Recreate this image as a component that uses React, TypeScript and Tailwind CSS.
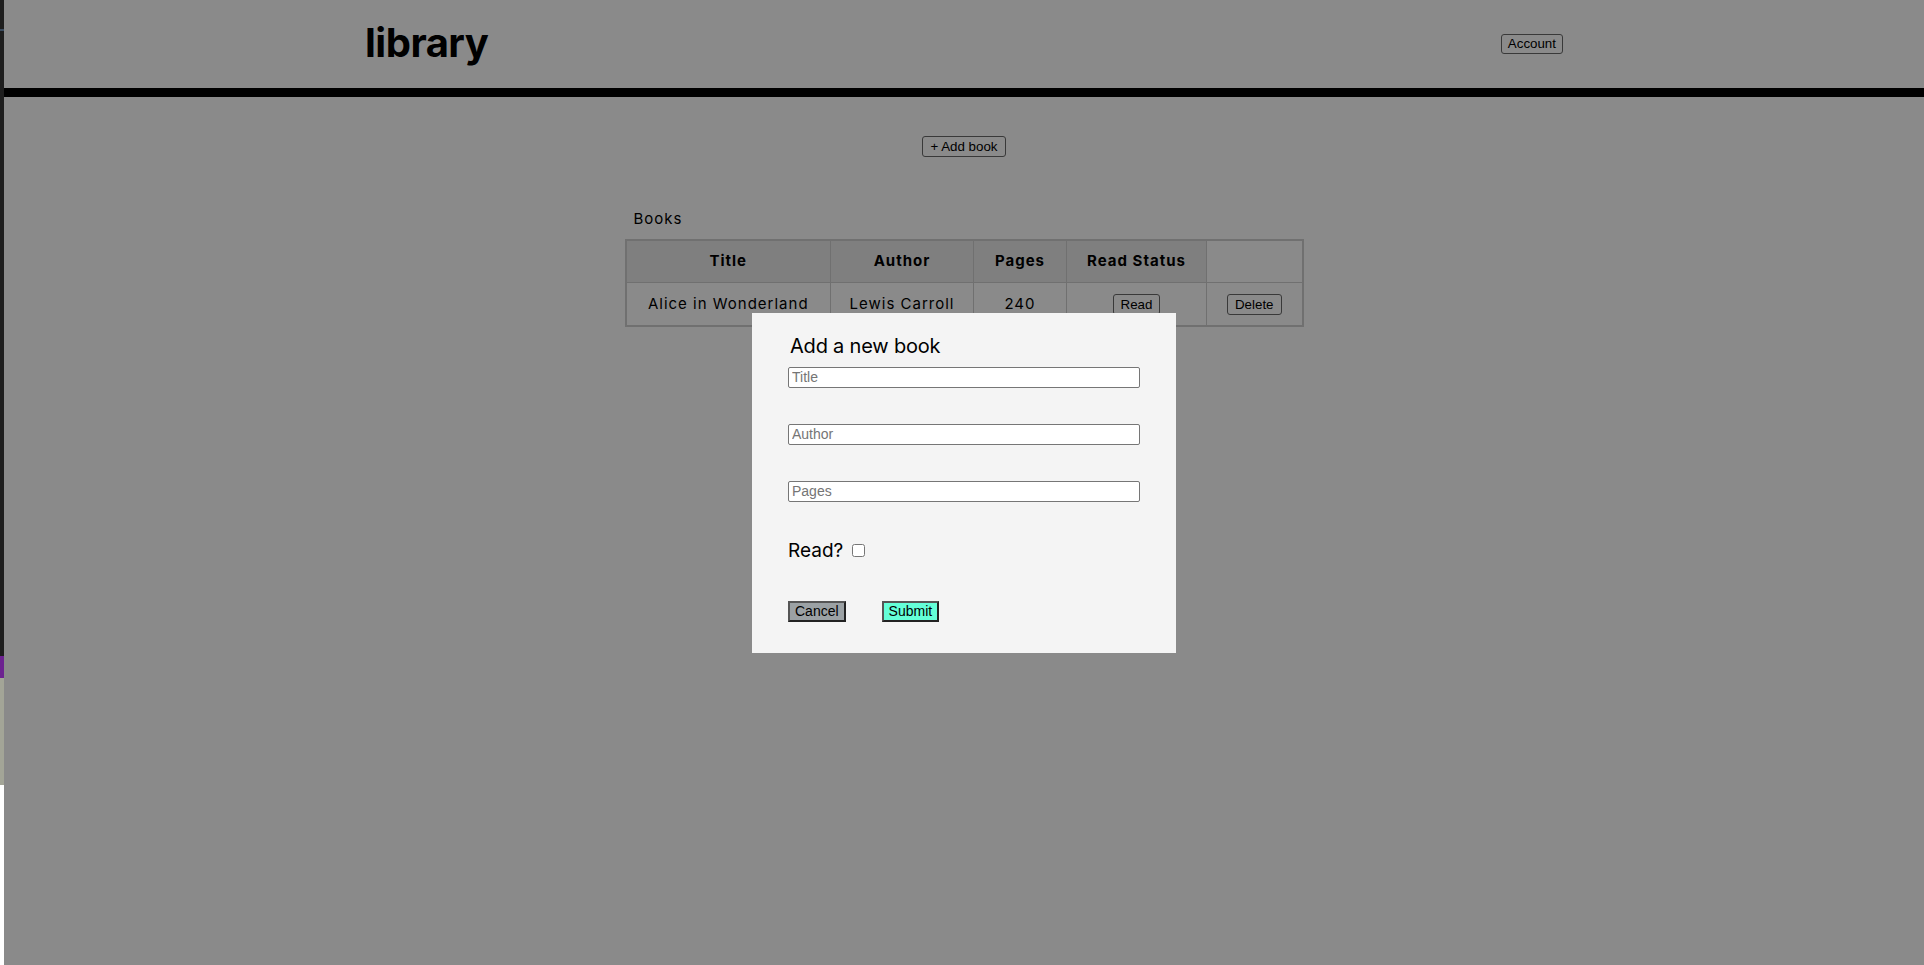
import React from "react";

const sans = "font-['Inter','Noto_Sans',sans-serif]";
const ui = "font-['Liberation_Sans',Arial,sans-serif] text-[13.33px]";

const books = [
  { title: "Alice in Wonderland", author: "Lewis Carroll", pages: 240, read: true },
];

function SideStrip() {
  return (
    <div className="flex w-[4px] shrink-0 flex-col">
      <div className="h-[29px] bg-[#1e1e1e]" />
      <div className="h-[2px] bg-[#3b4c60]" />
      <div className="h-[625px] bg-[#1e1e1e]" />
      <div className="h-[22px] bg-[#6c2290]" />
      <div className="h-[107px] bg-[#a3a597]" />
      <div className="flex-1 bg-white" />
    </div>
  );
}

function Header() {
  return (
    <header className="h-[97px] border-b-[9px] border-black">
      <div className="mx-auto flex h-full max-w-[1198px] items-center justify-between">
        <h1 className={`${sans} text-[40px] font-bold leading-none tracking-[-0.5px] text-black pb-[2px]`}>
          library
        </h1>
        <button className={`${ui} h-[20px] rounded-[3px] border border-[#6a6a6a] px-[6px] leading-none text-black`}>
          Account
        </button>
      </div>
    </header>
  );
}

function BookTable() {
  return (
    <table className={`${sans} mx-auto border-collapse border-2 border-[#cfcfcf] text-[15px] tracking-[1px] text-black`}>
      <caption className="pb-[8px] pl-[9px] text-left text-[15px] tracking-[1px]">Books</caption>
      <thead>
        <tr className="h-[43px]">
          <th className="w-[205px] border border-[#cfcfcf] bg-[#ebebeb] font-bold">Title</th>
          <th className="w-[143px] border border-[#cfcfcf] bg-[#ebebeb] font-bold">Author</th>
          <th className="w-[93px] border border-[#cfcfcf] bg-[#ebebeb] font-bold">Pages</th>
          <th className="w-[140px] border border-[#cfcfcf] bg-[#ebebeb] font-bold">Read Status</th>
          <th className="w-[96px] border border-[#cfcfcf]" />
        </tr>
      </thead>
      <tbody>
        {books.map((b) => (
          <tr key={b.title} className="h-[43px] text-center">
            <td className="border border-[#cfcfcf]">{b.title}</td>
            <td className="border border-[#cfcfcf]">{b.author}</td>
            <td className="border border-[#cfcfcf]">{b.pages}</td>
            <td className="border border-[#cfcfcf]">
              <button className={`${ui} h-[21px] rounded-[3px] border border-[#6a6a6a] px-[7px] leading-none tracking-normal`}>
                {b.read ? "Read" : "Not read"}
              </button>
            </td>
            <td className="border border-[#cfcfcf]">
              <button className={`${ui} h-[21px] rounded-[3px] border border-[#6a6a6a] px-[7px] leading-none tracking-normal`}>
                Delete
              </button>
            </td>
          </tr>
        ))}
      </tbody>
    </table>
  );
}

function AddBookDialog() {
  const field = `font-['Liberation_Sans',Arial,sans-serif] text-[14px] block h-[21px] w-full rounded-[2px] border border-[#767676] bg-white px-[3px] text-black placeholder:text-[#757575] outline-none`;
  return (
    <div className="absolute inset-0 flex items-center justify-center bg-black/[0.46]">
      <form className={`${sans} w-[424px] bg-[#f4f4f4] px-9 pt-[21px] pb-[31px] text-black`}>
        <h2 className="ml-[2px] text-[20px] leading-[24px] tracking-[-0.2px]">Add a new book</h2>
        <input className={`${field} mt-[9px]`} placeholder="Title" />
        <input className={`${field} mt-[36px]`} placeholder="Author" />
        <input className={`${field} mt-[36px]`} placeholder="Pages" />
        <label className="mt-[38px] flex items-center text-[19px] leading-[22px]">
          Read?
          <input type="checkbox" className="ml-[9px] h-[13px] w-[13px]" />
        </label>
        <div className="mt-[39px] flex gap-[36px]">
          <button type="button" className={`font-['Liberation_Sans',Arial,sans-serif] text-[14px] h-[21px] border-2 border-[#222] border-t-[#555] border-l-[#555] bg-[#9ba1a4] px-[5px] leading-none`}>
            Cancel
          </button>
          <button type="button" className={`font-['Liberation_Sans',Arial,sans-serif] text-[14px] h-[21px] border-2 border-[#222] border-t-[#555] border-l-[#555] bg-[#64ffd8] px-[5px] leading-none`}>
            Submit
          </button>
        </div>
      </form>
    </div>
  );
}

export default function App() {
  return (
    <div className="flex h-[965px] overflow-hidden">
      <SideStrip />
      <main className="relative flex-1 bg-white">
        <Header />
        <div className="mt-[39px] flex justify-center">
          <button className={`${ui} h-[21px] rounded-[3px] border border-[#6a6a6a] px-[7px] leading-none text-black`}>
            + Add book
          </button>
        </div>
        <div className="mt-[51px]">
          <BookTable />
        </div>
        <AddBookDialog />
      </main>
    </div>
  );
}
